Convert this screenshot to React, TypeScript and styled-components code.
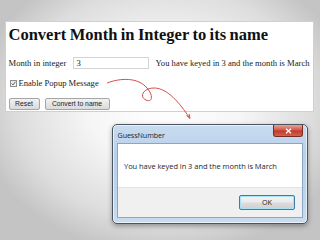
import React from "react";
import styled, { createGlobalStyle } from "styled-components";

const Global = createGlobalStyle`
  html, body { margin: 0; padding: 0; }
  body { width: 320px; height: 240px; overflow: hidden; }
`;

const Stage = styled.div`
  position: relative;
  width: 320px;
  height: 240px;
  overflow: hidden;
  background: radial-gradient(ellipse 190px 150px at 165px 105px, #ffffff 0%, #f6f6f6 40%, #dddddd 78%, #c4c4c4 100%);
  padding-top: 21px;
  box-sizing: border-box;
`;

const Panel = styled.div`
  margin-left: 5px;
  width: 309px;
  height: 91px;
  box-sizing: border-box;
  border: 1.5px solid #b3e6ab;
  background: #ffffff;
  padding: 3px 0 0 2.5px;
  font-family: "Liberation Serif", "Times New Roman", serif;
  color: #1a1a1a;
`;

const Title = styled.h1`
  margin: 0;
  font-size: 16.5px;
  word-spacing: -0.7px;
  font-weight: bold;
  line-height: 19px;
  white-space: nowrap;
  color: #111;
`;

const Row = styled.div<{ $top: number }>`
  display: flex;
  align-items: center;
  margin-top: ${(p) => p.$top}px;
  font-size: 8.6px;
  white-space: nowrap;
`;

const Label = styled.span`
  width: 64px;
`;

const TextInput = styled.div`
  width: 76px;
  height: 12px;
  box-sizing: border-box;
  border: 1px solid #d4d4d4;
  padding-left: 3px;
  font-size: 8.6px;
  line-height: 10px;
  margin-right: 7px;
`;

const Box = styled.span`
  width: 7px;
  height: 7px;
  box-sizing: border-box;
  border: 1px solid #8e8f8f;
  background: linear-gradient(#e6e6e6, #f6f6f6);
  margin: 0 2px 0 1px;
  display: inline-flex;
  align-items: center;
  justify-content: center;
`;

const ButtonRow = styled.div`
  display: flex;
  gap: 5px;
  margin-top: 10px;
`;

const WebButton = styled.div<{ $w: number }>`
  width: ${(p) => p.$w}px;
  height: 12px;
  box-sizing: border-box;
  border: 1px solid #a6a6a6;
  border-radius: 2px;
  background: linear-gradient(#f2f2f2, #dadada);
  font-family: "Liberation Sans", Arial, sans-serif;
  font-size: 6.8px;
  line-height: 10px;
  text-align: center;
  color: #222;
  white-space: nowrap;
`;

const Dialog = styled.div`
  margin: 12px 0 0 112px;
  width: 196px;
  height: 100px;
  box-sizing: border-box;
  border: 1px solid #4a5560;
  border-radius: 5px;
  background: linear-gradient(180deg, #c9dcef 0%, #b8d0ea 30%, #bcd4ec 70%, #cadcef 100%);
  box-shadow: 0 2px 5px rgba(0, 0, 0, 0.35), inset 0 0 0 1px rgba(255, 255, 255, 0.6);
  padding: 0 4px 5px 4px;
  display: flex;
  flex-direction: column;
  font-family: "Open Sans", "Noto Sans", sans-serif;
`;

const TitleBar = styled.div`
  height: 18px;
  display: flex;
  align-items: flex-start;
  justify-content: space-between;
`;

const DialogTitle = styled.span`
  font-size: 7.2px;
  color: #1e1e1e;
  margin-top: 4.5px;
  margin-left: 0.5px;
  letter-spacing: -0.1px;
`;

const Close = styled.div`
  width: 30px;
  height: 12px;
  box-sizing: border-box;
  border: 1px solid #7a2a22;
  border-top: none;
  border-radius: 0 0 3px 3px;
  background: linear-gradient(#e5a69b 0%, #d4574a 45%, #c23a2c 55%, #d0654e 100%);
  display: flex;
  align-items: center;
  justify-content: center;
`;

const Client = styled.div`
  flex: 1;
  border: 1px solid #8aa6c4;
  background: #ffffff;
  display: flex;
  flex-direction: column;
`;

const Message = styled.div`
  height: 43px;
  display: flex;
  align-items: center;
  padding-left: 6px;
  font-size: 7.5px;
  color: #1e1e1e;
  white-space: nowrap;
  letter-spacing: -0.05px;
`;

const Footer = styled.div`
  flex: 1;
  background: #f0f0f0;
  border-top: 1px solid #e2e2e2;
  display: flex;
  align-items: center;
  justify-content: flex-end;
  padding-right: 7px;
`;

const OkButton = styled.div`
  width: 56px;
  height: 15px;
  box-sizing: border-box;
  border: 1px solid #3d7bad;
  border-radius: 2px;
  box-shadow: inset 0 0 0 1px #a9e1f7;
  background: linear-gradient(#f2f2f2 0%, #ebebeb 48%, #dddddd 52%, #cfcfcf 100%);
  font-size: 7.2px;
  line-height: 13px;
  text-align: center;
  color: #1e1e1e;
  margin-top: -1px;
`;

const Arrow = styled.svg`
  position: absolute;
  left: 0;
  top: 0;
  pointer-events: none;
`;

export default function App() {
  return (
    <>
      <Global />
      <Stage>
        <Panel>
          <Title>Convert Month in Integer to its name</Title>
          <Row $top={13}>
            <Label>Month in integer</Label>
            <TextInput>3</TextInput>
            <span>You have keyed in 3 and the month is March</span>
          </Row>
          <Row $top={9}>
            <Box>
              <svg width="5" height="5" viewBox="0 0 5 5">
                <path d="M0.6 2.6 L2 4 L4.4 0.8" fill="none" stroke="#4a5a78" strokeWidth="0.9" />
              </svg>
            </Box>
            <span>Enable Popup Message</span>
          </Row>
          <ButtonRow>
            <WebButton $w={31}>Reset</WebButton>
            <WebButton $w={65}>Convert to name</WebButton>
          </ButtonRow>
        </Panel>
        <Dialog>
          <TitleBar>
            <DialogTitle>GuessNumber</DialogTitle>
            <Close>
              <svg width="7" height="6" viewBox="0 0 7 6">
                <path d="M1 0.8 L6 5.2 M6 0.8 L1 5.2" stroke="#ffffff" strokeWidth="1.4" />
              </svg>
            </Close>
          </TitleBar>
          <Client>
            <Message>You have keyed in 3 and the month is March</Message>
            <Footer>
              <OkButton>OK</OkButton>
            </Footer>
          </Client>
        </Dialog>
        <Arrow width="320" height="240" viewBox="0 0 320 240">
          <path
            d="M107 83 C120 78 138 77 147 88 C154 96 152 103 146 100 C139 97 143 88 154 88 C168 88 180 104 189 117"
            fill="none"
            stroke="#d03a3a"
            strokeWidth="0.9"
          />
          <path d="M186.5 115.5 L190 118.5 L189.2 114" fill="none" stroke="#d03a3a" strokeWidth="0.9" />
        </Arrow>
      </Stage>
    </>
  );
}
